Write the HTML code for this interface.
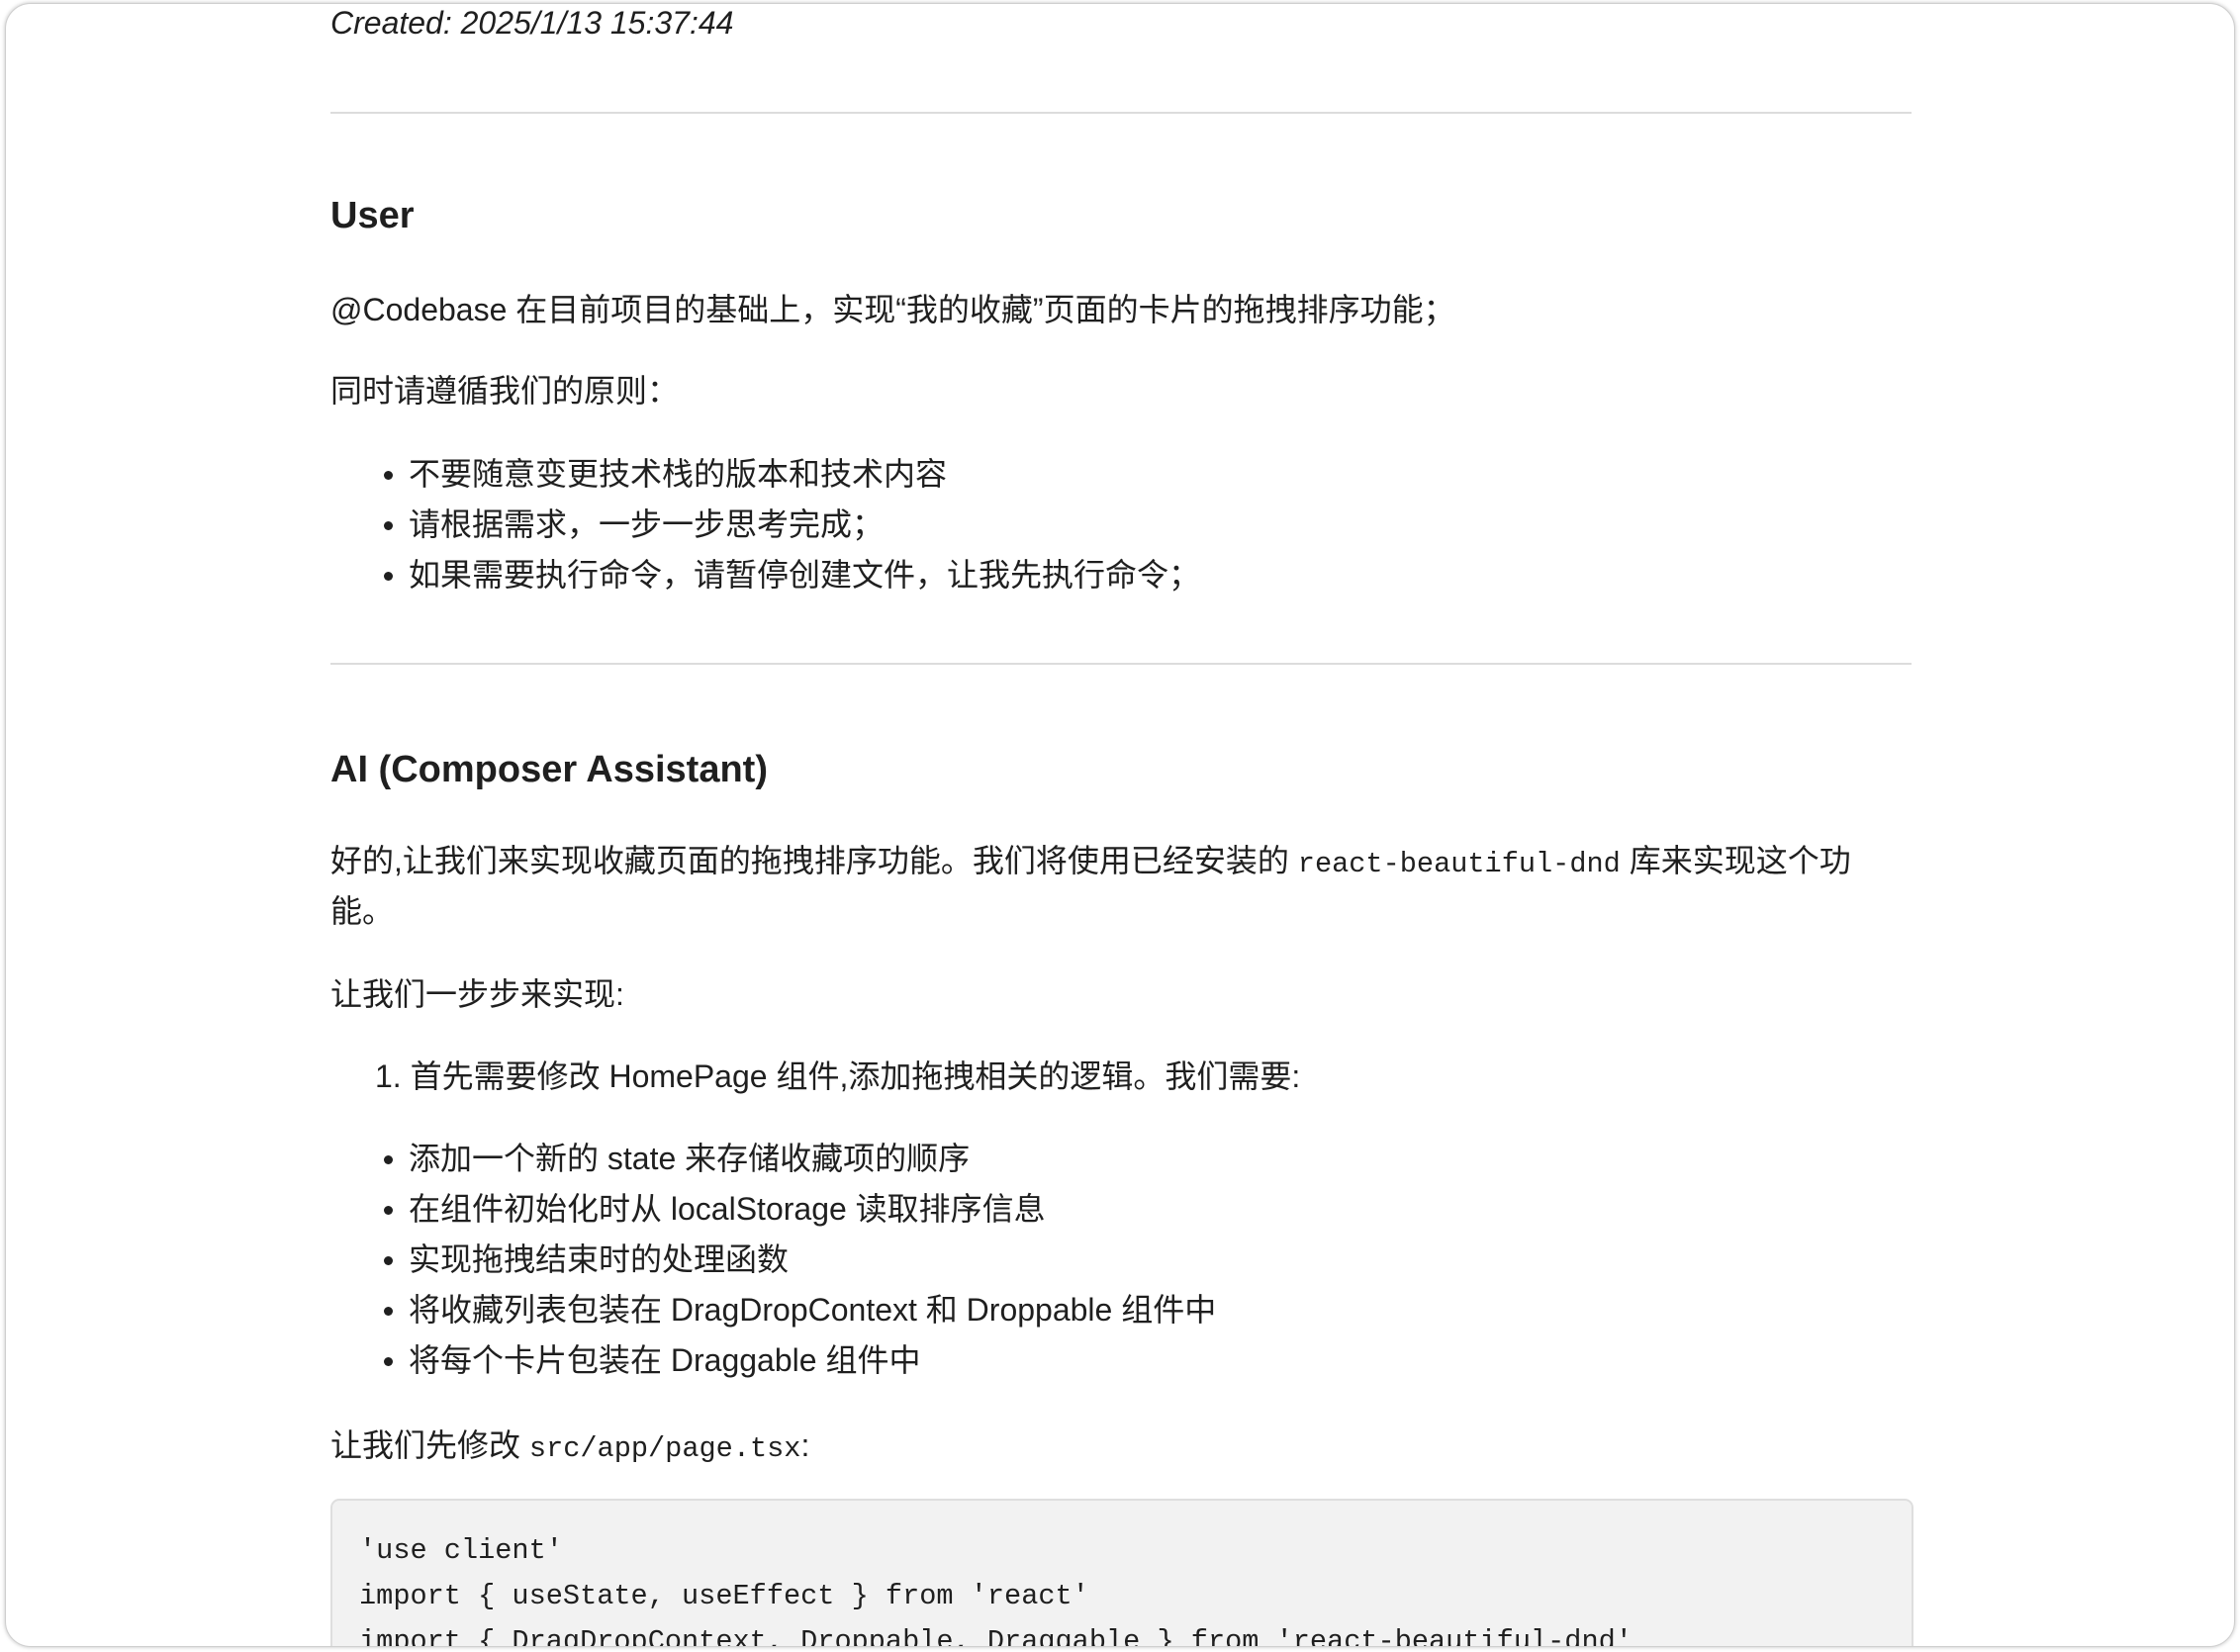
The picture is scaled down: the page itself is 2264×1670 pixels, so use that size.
<!DOCTYPE html>
<html><head><meta charset="utf-8"><style>
html,body{margin:0;padding:0;background:#fff;width:2264px;height:1670px;overflow:hidden}
.frame{position:absolute;left:5px;top:3px;width:2252px;height:1660px;border:1px solid #cfcfcf;border-radius:26px;box-shadow:0 0 4px rgba(0,0,0,.25);overflow:hidden;background:#fff}
.t{position:absolute;left:328px;font-family:"Liberation Sans","Noto Sans CJK SC",sans-serif;font-size:32px;line-height:50px;color:#1f1f1f;white-space:nowrap}
.h{font-weight:bold;font-size:38px}
.hr{position:absolute;left:328px;width:1598px;height:2px;background:#dcdcdc}
code,.mono{font-family:"Liberation Mono",monospace;font-size:28.6px}
.li{left:407px}
.dot{position:absolute;left:382px;width:9px;height:9px;border-radius:50%;background:#1f1f1f}
.code{position:absolute;left:328px;top:1511px;width:1596px;height:200px;background:#f2f2f2;border:2px solid #dedede;border-radius:9px}
.cl{position:absolute;left:27px;font-family:"Liberation Mono",monospace;font-size:28.6px;line-height:46px;color:#1f1f1f;white-space:pre}
</style></head><body>
<div class="frame">
<div class="t" style="top:-6px;font-style:italic">Created: 2025/1/13 15:37:44</div>
<div class="hr" style="top:109px"></div>
<div class="t h" style="top:189px">User</div>
<div class="t" style="top:284px">@Codebase 在目前项目的基础上，实现“我的收藏”页面的卡片的拖拽排序功能；</div>
<div class="t" style="top:366px">同时请遵循我们的原则：</div>
<div class="dot" style="top:472px"></div><div class="t li" style="top:450px">不要随意变更技术栈的版本和技术内容</div>
<div class="dot" style="top:523px"></div><div class="t li" style="top:501px">请根据需求，一步一步思考完成；</div>
<div class="dot" style="top:574px"></div><div class="t li" style="top:552px">如果需要执行命令，请暂停创建文件，让我先执行命令；</div>
<div class="hr" style="top:666px"></div>
<div class="t h" style="top:749px">AI (Composer Assistant)</div>
<div class="t" style="top:841px">好的,让我们来实现收藏页面的拖拽排序功能。我们将使用已经安装的 <code>react-beautiful-dnd</code> 库来实现这个功</div>
<div class="t" style="top:892px">能。</div>
<div class="t" style="top:976px">让我们一步步来实现:</div>
<div class="t" style="top:1059px;left:373px">1. 首先需要修改 HomePage 组件,添加拖拽相关的逻辑。我们需要:</div>
<div class="dot" style="top:1164px"></div><div class="t li" style="top:1142px">添加一个新的 state 来存储收藏项的顺序</div>
<div class="dot" style="top:1215px"></div><div class="t li" style="top:1193px">在组件初始化时从 localStorage 读取排序信息</div>
<div class="dot" style="top:1266px"></div><div class="t li" style="top:1244px">实现拖拽结束时的处理函数</div>
<div class="dot" style="top:1317px"></div><div class="t li" style="top:1295px">将收藏列表包装在 DragDropContext 和 Droppable 组件中</div>
<div class="dot" style="top:1368px"></div><div class="t li" style="top:1346px">将每个卡片包装在 Draggable 组件中</div>
<div class="t" style="top:1432px">让我们先修改 <code>src/app/page.tsx</code>:</div>
<div class="code">
<div class="cl" style="top:28px">'use client'</div>
<div class="cl" style="top:74px">import { useState, useEffect } from 'react'</div>
<div class="cl" style="top:120px">import { DragDropContext, Droppable, Draggable } from 'react-beautiful-dnd'</div>
</div>
</div>
</body></html>
